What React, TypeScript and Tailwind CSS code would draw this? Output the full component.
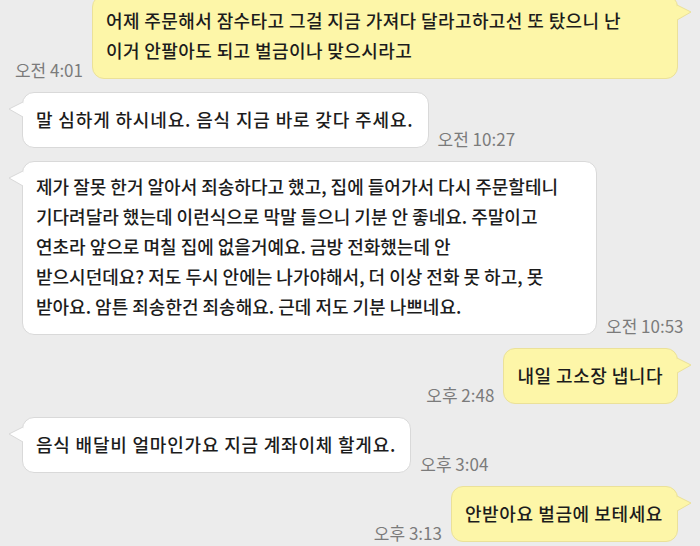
import React from "react";

type Msg = { side: "L" | "R"; lines: string[]; time: string; w?: string; tr?: string };

const msgs: Msg[] = [
  {
    side: "R",
    lines: [
      "어제 주문해서 잠수타고 그걸 지금 가져다 달라고하고선 또 탔으니 난",
      "이거 안팔아도 되고 벌금이나 맞으시라고",
    ],
    time: "오전 4:01",
    w: "w-[586px]",
    tr: "tracking-[0.4px]",
  },
  {
    side: "L",
    lines: ["말 심하게 하시네요. 음식 지금 바로 갖다 주세요."],
    time: "오전 10:27",
    tr: "tracking-[0.85px]",
  },
  {
    side: "L",
    lines: [
      "제가 잘못 한거 알아서 죄송하다고 했고, 집에 들어가서 다시 주문할테니",
      "기다려달라 했는데 이런식으로 막말 들으니 기분 안 좋네요. 주말이고",
      "연초라 앞으로 며칠 집에 없을거예요. 금방 전화했는데 안",
      "받으시던데요? 저도 두시 안에는 나가야해서, 더 이상 전화 못 하고, 못",
      "받아요. 암튼 죄송한건 죄송해요. 근데 저도 기분 나쁘네요.",
    ],
    time: "오전 10:53",
    w: "w-[575px]",
  },
  { side: "R", lines: ["내일 고소장 냅니다"], time: "오후 2:48", tr: "tracking-[0.5px]" },
  {
    side: "L",
    lines: ["음식 배달비 얼마인가요 지금 계좌이체 할게요."],
    time: "오후 3:04",
    tr: "tracking-[0.8px]",
  },
  { side: "R", lines: ["안받아요 벌금에 보테세요"], time: "오후 3:13", tr: "tracking-[0.6px]" },
];

function Time({ t }: { t: string }) {
  return (
    <div className="shrink-0 whitespace-nowrap text-[17px] leading-[18px] text-[#7b7b7b] font-['Noto_Sans_CJK_KR','Noto_Sans',sans-serif]">
      {t}
    </div>
  );
}

function Bubble({ m }: { m: Msg }) {
  const yellow = m.side === "R";
  const single = m.lines.length === 1;
  return (
    <div
      className={
        "relative shrink-0 rounded-[12px] border pl-[13px] pr-[14px] text-[18px] leading-[30px] font-medium text-[#1c1c1c] font-['Noto_Sans_CJK_KR','Noto_Sans',sans-serif] " +
        (single ? "pt-[11px] pb-[13px] " : "pt-[9px] pb-[13px] ") +
        (yellow ? "bg-[#fdf6a8] border-[#ebe199] " : "bg-white border-[#d9d9d9] ") +
        (m.w ?? "") +
        " " +
        (m.tr ?? "")
      }
    >
      {m.lines.map((l, i) => (
        <div key={i} className="whitespace-nowrap">
          {l}
        </div>
      ))}
      {yellow ? (
        <svg className="absolute right-[-15px] top-[8px]" width="16" height="18" viewBox="0 0 16 18">
          <path d="M1 1 L15 8 L1 16" fill="#fdf6a8" stroke="#ebe199" strokeWidth="1" />
        </svg>
      ) : (
        <svg className="absolute left-[-15px] top-[8px]" width="16" height="18" viewBox="0 0 16 18">
          <path d="M15 1 L1 8 L15 16" fill="#ffffff" stroke="#d9d9d9" strokeWidth="1" />
        </svg>
      )}
    </div>
  );
}

export default function App() {
  return (
    <div className="w-[700px] h-[546px] overflow-hidden bg-[#ececec]">
      <div className="flex flex-col gap-[13px] -mt-[5px]">
        {msgs.map((m, i) =>
          m.side === "R" ? (
            <div key={i} className="flex items-end justify-end gap-[9px] pr-[22px]">
              <Time t={m.time} />
              <Bubble m={m} />
            </div>
          ) : (
            <div key={i} className="flex items-end justify-start gap-[9px] pl-[22px]">
              <Bubble m={m} />
              <Time t={m.time} />
            </div>
          )
        )}
      </div>
    </div>
  );
}
